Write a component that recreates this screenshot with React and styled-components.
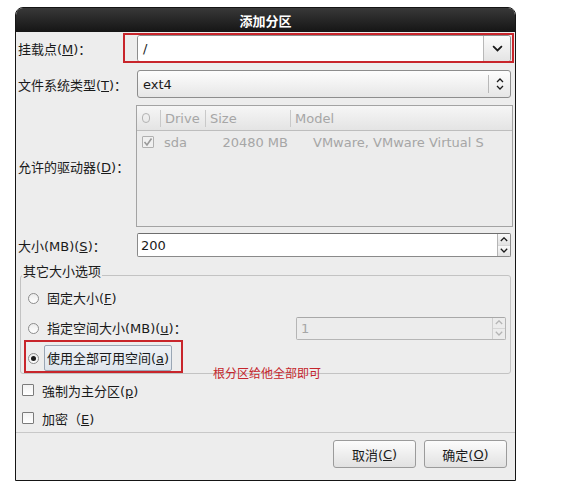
import React from "react";
import styled, { createGlobalStyle } from "styled-components";

const GlobalStyle = createGlobalStyle`
  html, body {
    margin: 0;
    background: #fff;
  }
  body {
    font-family: "DejaVu Sans", "Noto Sans CJK SC", sans-serif;
    font-size: 13px;
    color: #1a1a1a;
  }
  * {
    box-sizing: border-box;
  }
`;

const Page = styled.div`
  padding: 7px 0 0 15px;
`;

const Dialog = styled.div`
  width: 501px;
  border: 1px solid #151515;
  border-radius: 8px 8px 0 0;
  background: #ededed;
  overflow: hidden;
`;

const TitleBar = styled.div`
  height: 24px;
  display: flex;
  align-items: center;
  justify-content: center;
  background: linear-gradient(#383838, #151515);
  color: #fff;
  font-weight: bold;
  font-size: 13px;
`;

const Body = styled.div`
  padding: 3px 4px 0 2px;
`;

const Row = styled.div`
  display: flex;
  align-items: center;
  margin-top: ${props => props.$top || 0}px;
  height: ${props => props.$height}px;
`;

const Label = styled.div`
  width: 119px;
  flex: none;
  white-space: nowrap;
`;

const FieldWrap = styled.div`
  position: relative;
  flex: 1;
  height: 100%;
  display: flex;
`;

const RedMark = styled.div`
  position: absolute;
  border: 2px solid #c8252b;
  pointer-events: none;
`;

const Entry = styled.div`
  flex: 1;
  display: flex;
  align-items: center;
  padding-left: ${props => props.$pad || 4}px;
  background: ${props => (props.$disabled ? "#ececec" : "#fff")};
  color: ${props => (props.$disabled ? "#a6a6a6" : "#1a1a1a")};
`;

const ComboBox = styled.div`
  flex: 1;
  display: flex;
  border: 1px solid #8d8d8d;
  border-radius: 3px;
  overflow: hidden;
  background: ${props =>
    props.$button ? "linear-gradient(#fdfdfd, #e6e6e6)" : "#fff"};
`;

const ComboButton = styled.div`
  width: ${props => props.$width}px;
  flex: none;
  display: flex;
  align-items: center;
  justify-content: center;
  border-left: 1px solid #b8b8b8;
  background: ${props =>
    props.$plain ? "transparent" : "linear-gradient(#fbfbfb, #e4e4e4)"};
  margin: ${props => (props.$plain ? "4px 0" : "0")};
`;

const DriveList = styled.div`
  flex: 1;
  margin: 0 -2px 0 -1px;
  border: 1px solid #a3a3a3;
  background: #ececec;
  color: #a6a6a6;
`;

const ListHeader = styled.div`
  height: 25px;
  display: flex;
  align-items: center;
  border-bottom: 1px solid #bdbdbd;
  background: linear-gradient(#f6f6f6, #e4e4e4);
`;

const HeaderCell = styled.div`
  width: ${props => (props.$width ? `${props.$width}px` : "auto")};
  flex: ${props => (props.$width ? "none" : 1)};
  height: 17px;
  display: flex;
  align-items: center;
  padding-left: 4px;
  border-left: ${props => (props.$first ? "none" : "1px solid #c9c9c9")};
`;

const ListRow = styled.div`
  height: 22px;
  display: flex;
  align-items: center;
`;

const Cell = styled.div`
  width: ${props => (props.$width ? `${props.$width}px` : "auto")};
  flex: ${props => (props.$width ? "none" : 1)};
  padding: 0 ${props => props.$right || 0}px 0 ${props => props.$left || 0}px;
  text-align: ${props => (props.$align === "right" ? "right" : "left")};
  white-space: nowrap;
  overflow: hidden;
`;

const RoundMark = styled.div`
  width: 8px;
  height: 10px;
  margin-left: 1px;
  border: 1px solid #b3b3b3;
  border-radius: 4px;
`;

const CheckBox = styled.div`
  width: 12px;
  height: 12px;
  flex: none;
  border: 1px solid ${props => (props.$disabled ? "#b0b0b0" : "#7b7b7b")};
  border-radius: 1px;
  background: ${props =>
    props.$disabled ? "#f0f0f0" : "linear-gradient(#f2f2f2, #ffffff)"};
  display: flex;
  align-items: center;
  justify-content: center;
  margin-left: ${props => props.$left || 0}px;
`;

const SpinBox = styled.div`
  flex: ${props => (props.$width ? "none" : 1)};
  width: ${props => (props.$width ? `${props.$width}px` : "auto")};
  height: ${props => props.$height}px;
  display: flex;
  border: 1px solid ${props => (props.$disabled ? "#b5b5b5" : "#8a8a8a")};
  border-top-color: ${props => (props.$disabled ? "#a8a8a8" : "#6e6e6e")};
  border-radius: 2px;
  margin-left: ${props => (props.$width ? "auto" : "0")};
  overflow: hidden;
`;

const SpinButtons = styled.div`
  width: 13px;
  flex: none;
  display: flex;
  flex-direction: column;
  border-left: 1px solid ${props => (props.$disabled ? "#cfcfcf" : "#b5b5b5")};
`;

const SpinButton = styled.div`
  flex: 1;
  display: flex;
  align-items: center;
  justify-content: center;
  background: ${props =>
    props.$disabled ? "#ececec" : "linear-gradient(#fafafa, #e2e2e2)"};
  & + & {
    border-top: 1px solid ${props => (props.$disabled ? "#d6d6d6" : "#bdbdbd")};
  }
`;

const Frame = styled.div`
  position: relative;
  margin: 18px 0 0 2px;
  border: 1px solid #c3c3c3;
  border-radius: 3px;
  padding: 0 4px 0 7px;
`;

const FrameTitle = styled.div`
  width: fit-content;
  margin: -12px 0 0 -6px;
  padding: 0 1px;
  line-height: 16px;
  background: #ededed;
`;

const RadioList = styled.div`
  padding-top: 3px;
`;

const RadioRow = styled.div`
  position: relative;
  height: 30px;
  display: flex;
  align-items: center;
`;

const Radio = styled.div`
  width: 11px;
  height: 11px;
  flex: none;
  border: 1px solid #8c8c8c;
  border-radius: 50%;
  background: linear-gradient(#ececec, #ffffff);
  display: flex;
  align-items: center;
  justify-content: center;
  &::after {
    content: "";
    display: ${props => (props.$checked ? "block" : "none")};
    width: 5px;
    height: 5px;
    border-radius: 50%;
    background: #1c1c1c;
  }
`;

const OptionText = styled.div`
  margin-left: 5px;
  padding: 2px 2px 3px;
  border: 1px solid ${props => (props.$hover ? "#9aa6b4" : "transparent")};
  border-radius: 2px;
  background: ${props =>
    props.$hover ? "linear-gradient(#eef2f7, #dfe5ec)" : "transparent"};
  white-space: nowrap;
`;

const Note = styled.div`
  position: absolute;
  left: 192px;
  top: 91px;
  color: #c4262c;
  font-size: 12px;
  line-height: 14px;
  white-space: nowrap;
`;

const CheckRow = styled.div`
  height: 28px;
  display: flex;
  align-items: center;
  margin-top: ${props => props.$top || 0}px;
`;

const CheckText = styled.div`
  margin-left: 8px;
`;

const Footer = styled.div`
  display: flex;
  justify-content: flex-end;
  gap: 8px;
  padding: 7px 8px 12px;
  border-top: 1px solid #c8c8c8;
`;

const Button = styled.div`
  width: 83px;
  height: 28px;
  display: flex;
  align-items: center;
  justify-content: center;
  border: 1px solid #9b9b9b;
  border-radius: 3px;
  background: linear-gradient(#fcfcfc, #e1e1e1);
`;

const Chevron = ({ up, size = 10, color = "#1a1a1a" }) => (
  <svg width={size} height={size * 0.6} viewBox="0 0 10 6">
    <path
      d={up ? "M1 5 L5 1 L9 5" : "M1 1 L5 5 L9 1"}
      fill="none"
      stroke={color}
      strokeWidth="1.6"
    />
  </svg>
);

const UpDown = () => (
  <svg width="8" height="14" viewBox="0 0 8 14">
    <path d="M1 5 L4 2 L7 5 M1 9 L4 12 L7 9" fill="none" stroke="#1a1a1a" strokeWidth="1.3" />
  </svg>
);

const Tick = () => (
  <svg width="10" height="10" viewBox="0 0 10 10">
    <path d="M1.5 5 L4 8 L8.5 1.5" fill="none" stroke="#9a9a9a" strokeWidth="1.6" />
  </svg>
);

export default function App() {
  return (
    <>
      <GlobalStyle />
      <Page>
        <Dialog>
          <TitleBar>添加分区</TitleBar>
          <Body>
            <Row $height={27}>
              <Label>
                挂载点(<u>M</u>)：
              </Label>
              <FieldWrap>
                <ComboBox>
                  <Entry $pad={5}>/</Entry>
                  <ComboButton $width={27}>
                    <Chevron size={11} />
                  </ComboButton>
                </ComboBox>
                <RedMark style={{ left: -14, top: -2, right: -3, bottom: -1 }} />
              </FieldWrap>
            </Row>
            <Row $top={8} $height={28}>
              <Label>
                文件系统类型(<u>T</u>)：
              </Label>
              <FieldWrap>
                <ComboBox $button>
                  <Entry $pad={5} style={{ background: "transparent" }}>
                    ext4
                  </Entry>
                  <ComboButton $width={22} $plain>
                    <UpDown />
                  </ComboButton>
                </ComboBox>
              </FieldWrap>
            </Row>
            <Row $top={7} $height={122}>
              <Label>
                允许的驱动器(<u>D</u>)：
              </Label>
              <FieldWrap>
                <DriveList>
                  <ListHeader>
                    <HeaderCell $width={23} $first>
                      <RoundMark />
                    </HeaderCell>
                    <HeaderCell $width={45}>Drive</HeaderCell>
                    <HeaderCell $width={85}>Size</HeaderCell>
                    <HeaderCell>Model</HeaderCell>
                  </ListHeader>
                  <ListRow>
                    <Cell $width={23} $left={5}>
                      <CheckBox $disabled>
                        <Tick />
                      </CheckBox>
                    </Cell>
                    <Cell $width={46} $left={4}>
                      sda
                    </Cell>
                    <Cell $width={86} $right={4} $align="right">
                      20480 MB
                    </Cell>
                    <Cell $left={21}>VMware, VMware Virtual S</Cell>
                  </ListRow>
                </DriveList>
              </FieldWrap>
            </Row>
            <Row $top={6} $height={24}>
              <Label>
                大小(MB)(<u>S</u>)：
              </Label>
              <SpinBox $height={24}>
                <Entry $pad={3}>200</Entry>
                <SpinButtons>
                  <SpinButton>
                    <Chevron up size={8} />
                  </SpinButton>
                  <SpinButton>
                    <Chevron size={8} />
                  </SpinButton>
                </SpinButtons>
              </SpinBox>
            </Row>

            <Frame>
              <FrameTitle>其它大小选项</FrameTitle>
              <RadioList>
                <RadioRow>
                  <Radio />
                  <OptionText>
                    固定大小(<u>F</u>)
                  </OptionText>
                </RadioRow>
                <RadioRow>
                  <Radio />
                  <OptionText>
                    指定空间大小(MB)(<u>u</u>)：
                  </OptionText>
                  <SpinBox $width={210} $height={23} $disabled>
                    <Entry $pad={4} $disabled>
                      1
                    </Entry>
                    <SpinButtons $disabled>
                      <SpinButton $disabled>
                        <Chevron up size={8} color="#b4b4b4" />
                      </SpinButton>
                      <SpinButton $disabled>
                        <Chevron size={8} color="#b4b4b4" />
                      </SpinButton>
                    </SpinButtons>
                  </SpinBox>
                </RadioRow>
                <RadioRow>
                  <Radio $checked />
                  <OptionText $hover>
                    使用全部可用空间(<u>a</u>)
                  </OptionText>
                  <RedMark style={{ left: -4, top: -3, width: 159, height: 33 }} />
                </RadioRow>
              </RadioList>
              <Note>根分区给他全部即可</Note>
            </Frame>

            <CheckRow $top={2}>
              <CheckBox $left={4} />
              <CheckText>
                強制为主分区(<u>p</u>)
              </CheckText>
            </CheckRow>
            <CheckRow>
              <CheckBox $left={4} />
              <CheckText>
                加密（<u>E</u>)
              </CheckText>
            </CheckRow>
          </Body>
          <Footer>
            <Button>
              取消(<u>C</u>)
            </Button>
            <Button>
              确定(<u>O</u>)
            </Button>
          </Footer>
        </Dialog>
      </Page>
    </>
  );
}
